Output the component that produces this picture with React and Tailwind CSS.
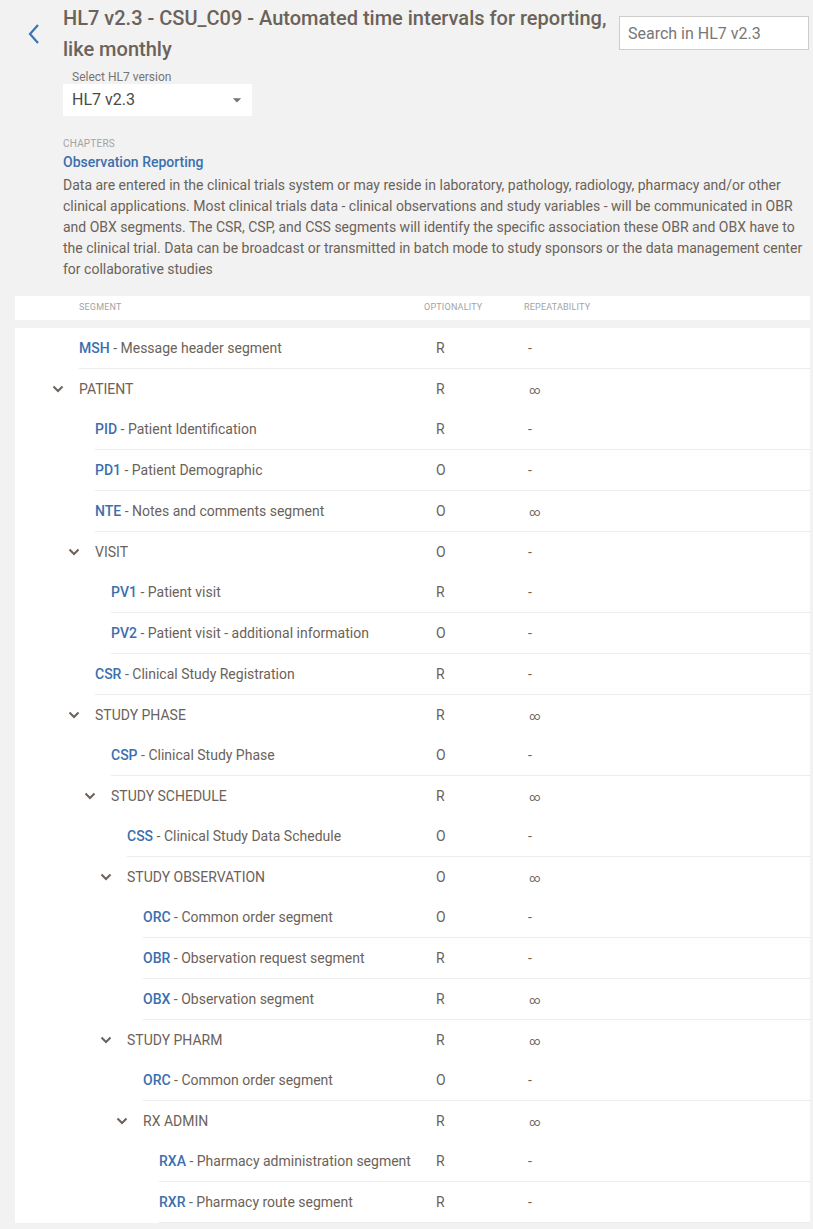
import React from 'react';

const rows = [
  { level: 0, code: 'MSH', name: 'Message header segment', opt: 'R', rep: '-' },
  { level: 0, group: 'PATIENT', opt: 'R', rep: '∞' },
  { level: 1, code: 'PID', name: 'Patient Identification', opt: 'R', rep: '-' },
  { level: 1, code: 'PD1', name: 'Patient Demographic', opt: 'O', rep: '-' },
  { level: 1, code: 'NTE', name: 'Notes and comments segment', opt: 'O', rep: '∞' },
  { level: 1, group: 'VISIT', opt: 'O', rep: '-' },
  { level: 2, code: 'PV1', name: 'Patient visit', opt: 'R', rep: '-' },
  { level: 2, code: 'PV2', name: 'Patient visit - additional information', opt: 'O', rep: '-' },
  { level: 1, code: 'CSR', name: 'Clinical Study Registration', opt: 'R', rep: '-' },
  { level: 1, group: 'STUDY PHASE', opt: 'R', rep: '∞' },
  { level: 2, code: 'CSP', name: 'Clinical Study Phase', opt: 'O', rep: '-' },
  { level: 2, group: 'STUDY SCHEDULE', opt: 'R', rep: '∞' },
  { level: 3, code: 'CSS', name: 'Clinical Study Data Schedule', opt: 'O', rep: '-' },
  { level: 3, group: 'STUDY OBSERVATION', opt: 'O', rep: '∞' },
  { level: 4, code: 'ORC', name: 'Common order segment', opt: 'O', rep: '-' },
  { level: 4, code: 'OBR', name: 'Observation request segment', opt: 'R', rep: '-' },
  { level: 4, code: 'OBX', name: 'Observation segment', opt: 'R', rep: '∞' },
  { level: 3, group: 'STUDY PHARM', opt: 'R', rep: '∞' },
  { level: 4, code: 'ORC', name: 'Common order segment', opt: 'O', rep: '-' },
  { level: 4, group: 'RX ADMIN', opt: 'R', rep: '∞' },
  { level: 5, code: 'RXA', name: 'Pharmacy administration segment', opt: 'R', rep: '-' },
  { level: 5, code: 'RXR', name: 'Pharmacy route segment', opt: 'R', rep: '-' },
];

function Chevron() {
  return (
    <svg width="12" height="8" viewBox="0 0 12 8" className="text-[#6b6259]">
      <path d="M1.5 1.5 L6 6 L10.5 1.5" fill="none" stroke="currentColor" strokeWidth="2" />
    </svg>
  );
}

function Row({ r }) {
  // each level indents 16px; text of level 0 starts at x=79
  return (
    <div className="flex" style={{ paddingLeft: 64 + r.level * 16 }}>
      <div className={`flex flex-1 items-center h-[40px] ${r.group ? '' : 'border-b border-[#ececec] box-content'}`}>
        <div className="relative flex-1 text-[14px] text-[#6b6259] whitespace-nowrap">
          {r.group ? (
            <>
              <span className="absolute -left-[27px] top-[6px]"><Chevron /></span>
              <span>{r.group}</span>
            </>
          ) : (
            <span>
              <span className="font-medium text-[#3c6fae]">{r.code}</span> - {r.name}
            </span>
          )}
        </div>
        <div className="w-[100px] pl-[8px] text-[14px] text-[#6b6259]">{r.opt}</div>
        <div className="w-[282px] text-[#6b6259]">
          {r.rep === '∞' ? <span className="text-[11px] pl-[1px]">∞</span> : <span className="text-[14px]">-</span>}
        </div>
      </div>
    </div>
  );
}

export default function App() {
  return (
    <div className="min-h-[1229px] bg-[#f2f2f2] font-['Roboto',sans-serif] text-[#6b6259]">
      <div className="flex pr-[4px]">
        <div className="w-[63px] flex justify-center pt-[23px] pl-[4px]">
          <svg width="14" height="22" viewBox="0 0 14 22">
            <path d="M11 2 L3 11 L11 20" fill="none" stroke="#3b73b9" strokeWidth="2.2" />
          </svg>
        </div>
        <div className="flex-1 pt-[3px]">
          <h1 className="text-[20px] leading-[31px] font-medium text-[#6b6259] pr-[10px]">
            HL7 v2.3 - CSU_C09 - Automated time intervals for reporting, like monthly
          </h1>
        </div>
        <div className="pt-[16px]">
          <input
            className="w-[190px] h-[34px] bg-white border border-[#cccccc] px-[8px] text-[16px] text-[#6b6259] placeholder:text-[#777] outline-none"
            placeholder="Search in HL7 v2.3"
          />
        </div>
      </div>

      <div className="pl-[63px]">
        <div className="pl-[9px] pt-[5px] text-[12px] leading-[14px] text-[#757575]">Select HL7 version</div>
        <div className="w-[189px] h-[32px] bg-white flex items-center justify-between pl-[9px] pr-[5px]">
          <span className="text-[16px] text-[#4a4a4a]">HL7 v2.3</span>
          <svg width="20" height="20" viewBox="0 0 24 24"><path d="M7 10l5 5 5-5z" fill="#757575" /></svg>
        </div>

        <div className="mt-[21px] text-[10px] leading-[14px] text-[#a3a3a3] tracking-[0.2px]">CHAPTERS</div>
        <div className="text-[14px] leading-[22px] font-medium text-[#3c6fae]">Observation Reporting</div>
        <p className="mt-[2px] text-[14px] leading-[21px] text-[#6b6259] pr-[6px]">
          Data are entered in the clinical trials system or may reside in laboratory, pathology, radiology, pharmacy and/or other clinical applications. Most clinical trials data - clinical observations and study variables - will be communicated in OBR and OBX segments. The CSR, CSP, and CSS segments will identify the specific association these OBR and OBX have to the clinical trial. Data can be broadcast or transmitted in batch mode to study sponsors or the data management center for collaborative studies
        </p>
      </div>

      <div className="pl-[15px] pr-[3px] pt-[16px]">
        <div className="bg-white h-[24px] flex items-center text-[9px] text-[#a3a3a3] tracking-[0.2px]">
          <div className="flex-1 pl-[64px]">SEGMENT</div>
          <div className="w-[100px]">OPTIONALITY</div>
          <div className="w-[286px]">REPEATABILITY</div>
        </div>
        <div className="bg-white mt-[8px]">
          {rows.map((r, i) => (
            <Row key={i} r={r} />
          ))}
        </div>
      </div>
    </div>
  );
}
